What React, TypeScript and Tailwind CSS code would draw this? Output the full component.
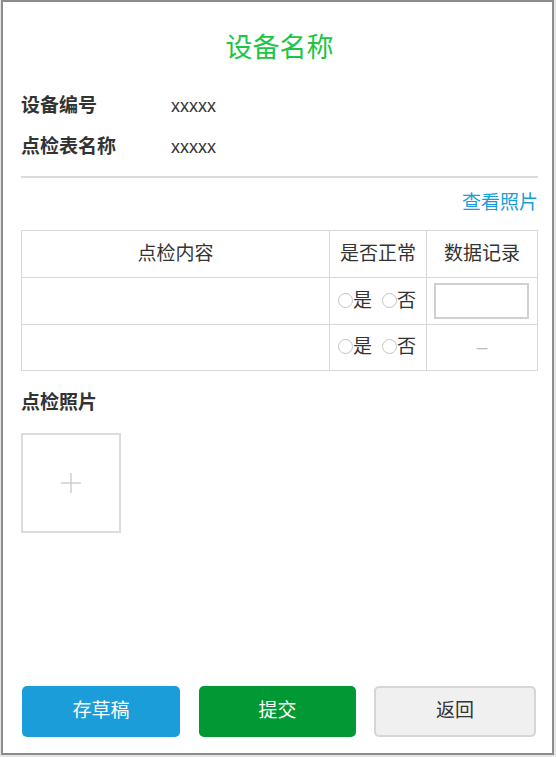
import { useState } from "react"

const font = { fontFamily: '"Liberation Sans", "Noto Sans CJK SC", sans-serif' }

type Row = { id: number; hasInput: boolean; h: string }

const rows: Row[] = [
  { id: 1, hasInput: true, h: "h-[47px]" },
  { id: 2, hasInput: false, h: "h-[46px]" },
]

function Radio({ label, checked, onClick }: { label: string; checked: boolean; onClick: () => void }) {
  return (
    <label className="flex items-center cursor-pointer" onClick={onClick}>
      <span className="w-[15px] h-[15px] shrink-0 rounded-full border border-[#c4c4c4] bg-white flex items-center justify-center -translate-y-[1px]">
        {checked && <span className="w-[7px] h-[7px] rounded-full bg-[#1a9dd9]" />}
      </span>
      <span>{label}</span>
    </label>
  )
}

export default function App() {
  const [status, setStatus] = useState<Record<number, string>>({})

  return (
    <div className="w-[556px] h-[757px] bg-[#e6e6e6] text-[#333]" style={font}>
      <div className="ml-[1px] w-[553px] h-[755px] border-2 border-[#8c8c8c] bg-white flex flex-col pl-[18px] pr-[14px] pt-[28px] pb-[16px]">
        <h1 className="text-center text-[27px] leading-[36px] text-[#1cc544]">设备名称</h1>

        <div className="mt-[20px] text-[19px]">
          <div className="flex h-[41px] items-center">
            <span className="w-[150px] font-bold">设备编号</span>
            <span className="text-[18px]">xxxxx</span>
          </div>
          <div className="flex h-[41px] items-center">
            <span className="w-[150px] font-bold">点检表名称</span>
            <span className="text-[18px]">xxxxx</span>
          </div>
        </div>

        <div className="mt-[8px] h-[2px] bg-[#dadada]" />

        <div className="mt-[13px] text-right text-[19px] leading-[24px] text-[#1a9dd9]">查看照片</div>

        <table className="mt-[15px] w-full border-collapse text-[19px] table-fixed">
          <colgroup>
            <col className="w-[308px]" />
            <col className="w-[97px]" />
            <col />
          </colgroup>
          <thead>
            <tr className="h-[47px]">
              <th className="border border-[#d8d8d8] font-normal">点检内容</th>
              <th className="border border-[#d8d8d8] font-normal">是否正常</th>
              <th className="border border-[#d8d8d8] font-normal">数据记录</th>
            </tr>
          </thead>
          <tbody>
            {rows.map((r) => (
              <tr key={r.id} className={r.h}>
                <td className="border border-[#d8d8d8]" />
                <td className="border border-[#d8d8d8] px-[8px]">
                  <div className="flex items-center gap-[10px]">
                    <Radio label="是" checked={status[r.id] === "yes"} onClick={() => setStatus({ ...status, [r.id]: "yes" })} />
                    <Radio label="否" checked={status[r.id] === "no"} onClick={() => setStatus({ ...status, [r.id]: "no" })} />
                  </div>
                </td>
                <td className="border border-[#d8d8d8] px-[7px] text-center">
                  {r.hasInput ? (
                    <input className="block w-[95px] h-[36px] border-2 border-[#d0d0d0] outline-none px-1" />
                  ) : (
                    <span className="text-[#bbb]">–</span>
                  )}
                </td>
              </tr>
            ))}
          </tbody>
        </table>

        <div className="mt-[20px] text-[19px] leading-[24px] font-bold">点检照片</div>

        <div className="mt-[18px] w-[100px] h-[100px] border-2 border-[#dcdcdc] flex items-center justify-center cursor-pointer">
          <svg width="22" height="22" viewBox="0 0 22 22">
            <path d="M11 1v20M1 11h20" stroke="#cfcfcf" strokeWidth="1.5" />
          </svg>
        </div>

        <div className="mt-auto flex pl-[1px] text-[19px]">
          <button className="w-[158px] h-[51px] rounded-[5px] bg-[#1a9dd9] text-white">存草稿</button>
          <button className="ml-[19px] w-[157px] h-[51px] rounded-[5px] bg-[#009933] text-white">提交</button>
          <button className="ml-[18px] w-[162px] h-[51px] rounded-[5px] bg-[#f0f0f0] border-2 border-[#d6d6d6] text-[#333]">返回</button>
        </div>
      </div>
    </div>
  )
}
